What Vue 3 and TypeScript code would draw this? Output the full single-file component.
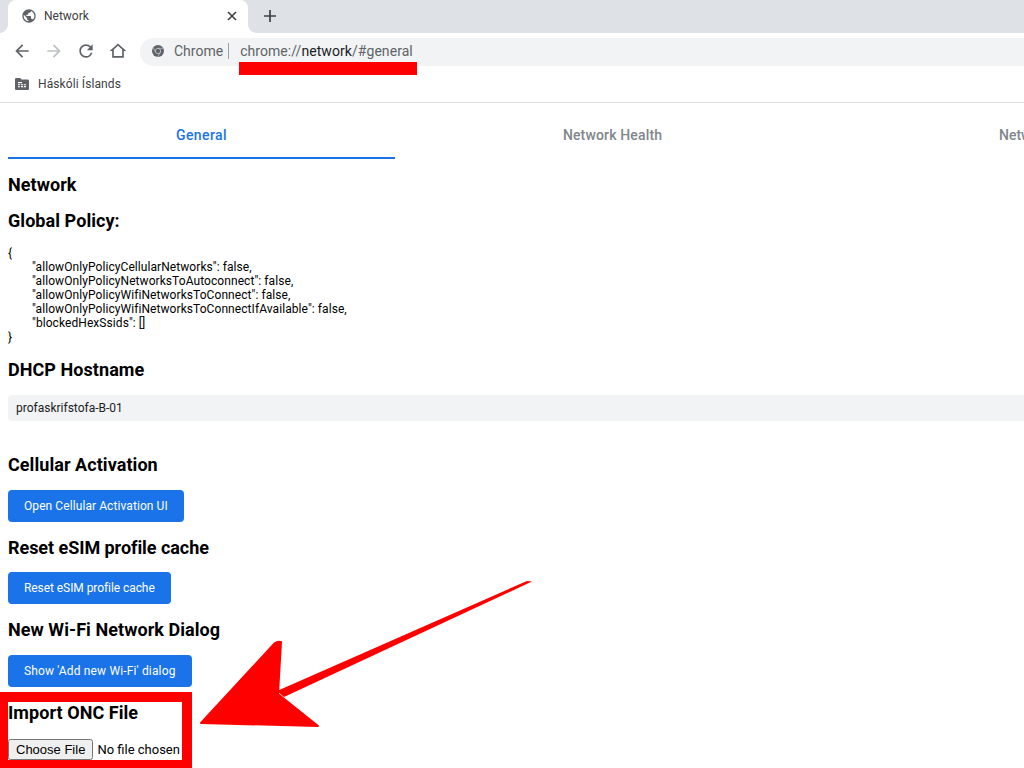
<script setup lang="ts">
const policy: string[] = [
  '"allowOnlyPolicyCellularNetworks": false,',
  '"allowOnlyPolicyNetworksToAutoconnect": false,',
  '"allowOnlyPolicyWifiNetworksToConnect": false,',
  '"allowOnlyPolicyWifiNetworksToConnectIfAvailable": false,',
  '"blockedHexSsids": []',
]
</script>

<template>
  <div class="page">
    <header class="tabstrip">
      <div class="tab">
        <svg class="favicon" viewBox="0 0 24 24" width="16" height="16">
          <path fill="#5f6368" d="M12 2C6.48 2 2 6.48 2 12s4.48 10 10 10 10-4.48 10-10S17.52 2 12 2zm-1 17.93c-3.95-.49-7-3.85-7-7.93 0-.62.08-1.21.21-1.79L9 15v1c0 1.1.9 2 2 2v1.93zm6.9-2.54c-.26-.81-1-1.39-1.9-1.39h-1v-3c0-.55-.45-1-1-1H8v-2h2c.55 0 1-.45 1-1V7h2c1.1 0 2-.9 2-2v-.41c2.93 1.19 5 4.06 5 7.41 0 2.08-.8 3.97-2.1 5.39z" />
        </svg>
        <span class="tab-title">Network</span>
        <svg class="tab-close" viewBox="0 0 10 10" width="10" height="10">
          <path d="M1 1l8 8M9 1l-8 8" stroke="#3c4043" stroke-width="1.6" fill="none" />
        </svg>
      </div>
      <svg class="new-tab" viewBox="0 0 12 12" width="12" height="12">
        <path d="M6 0v12M0 6h12" stroke="#3c4043" stroke-width="1.7" fill="none" />
      </svg>
    </header>

    <div class="toolbar">
      <svg class="nav" viewBox="0 0 24 24" width="20" height="20"><path fill="#5f6368" d="M20 11H7.83l5.59-5.59L12 4l-8 8 8 8 1.41-1.41L7.83 13H20v-2z" /></svg>
      <svg class="nav" viewBox="0 0 24 24" width="20" height="20"><path fill="#bdc1c6" d="M12 4l-1.41 1.41L16.17 11H4v2h12.17l-5.58 5.59L12 20l8-8z" /></svg>
      <svg class="nav" viewBox="0 0 24 24" width="20" height="20"><path fill="#5f6368" d="M17.65 6.35A7.958 7.958 0 0 0 12 4c-4.42 0-7.99 3.58-7.99 8s3.57 8 7.99 8c3.73 0 6.84-2.55 7.73-6h-2.08A5.99 5.99 0 0 1 12 18c-3.31 0-6-2.69-6-6s2.69-6 6-6c1.66 0 3.14.69 4.22 1.78L13 11h7V4l-2.35 2.35z" /></svg>
      <svg class="nav" viewBox="0 0 24 24" width="20" height="20"><path fill="#5f6368" d="M12 3L2 12h3v8h14v-8h3L12 3zm5 15H7v-7.8l5-4.5 5 4.5V18z" /></svg>
      <div class="omnibox">
        <svg class="chrome-logo" viewBox="0 0 12 12" width="12" height="12">
          <circle cx="6" cy="6" r="6" fill="#5f6368" />
          <circle cx="6" cy="6" r="2.700" fill="#5f6368" stroke="#c4c7ca" stroke-width="0.800" />
          <path d="M6 3.300h5.500M3.700 7.400L1 2.500M8.300 7.400L5.500 12" stroke="#c4c7ca" stroke-width="0.700" fill="none" />
        </svg>
        <span class="origin">Chrome</span>
        <span class="sep"></span>
        <span class="url">chrome://<b>network</b>/#general</span>
      </div>
    </div>

    <div class="bookmarks">
      <svg viewBox="0 0 14 12" width="14" height="12">
        <path fill="#5f6368" d="M1.300 0h4l1.300 1.500h6.100c.7 0 1.300.6 1.300 1.300v7.900c0 .7-.6 1.300-1.300 1.300H1.300C.6 12 0 11.400 0 10.700V1.300C0 .6.600 0 1.300 0z" />
        <path fill="#fff" d="M3 4h4v1.200H3zM3 6.200h2v1H3zM3 8.200h2v1H3zM6 6.200h5v3H6z" />
        <path fill="#5f6368" d="M8 6.200h1v3H8zM6 7.300h5v.8H6z" />
      </svg>
      <span>Háskóli Íslands</span>
    </div>

    <nav class="tabs">
      <div class="page-tab active">General</div>
      <div class="page-tab second">Network Health</div>
      <div class="page-tab third">Network Logs</div>
    </nav>

    <main class="content">
      <h2 class="h-network">Network</h2>
      <h2 class="h-policy">Global Policy:</h2>
      <div class="policy">
        <div>{</div>
        <div v-for="line in policy" :key="line" class="indent">{{ line }}</div>
        <div>}</div>
      </div>
      <h2 class="h-dhcp">DHCP Hostname</h2>
      <div class="hostname">profaskrifstofa-B-01</div>
      <h2 class="h-cell">Cellular Activation</h2>
      <button class="action open">Open Cellular Activation UI</button>
      <h2 class="h-next h-reset">Reset eSIM profile cache</h2>
      <button class="action reset">Reset eSIM profile cache</button>
      <h2 class="h-next">New Wi-Fi Network Dialog</h2>
      <button class="action show">Show 'Add new Wi-Fi' dialog</button>
      <h2 class="h-import">Import ONC File</h2>
      <input class="file" type="file" />
    </main>

    <div class="url-mark"></div>
    <div class="box-mark"></div>
    <svg class="arrow" viewBox="0 0 1024 768" width="1024" height="768">
      <path fill="#f00" d="M532 581.500 L527 581 L277 691 L284 697 Z" />
      <path fill="#f00" stroke="#f00" stroke-width="2" stroke-linejoin="round" d="M201 723 L275 643 Q278 641 281 642 L278 694 L318 726 Z" />
    </svg>
  </div>
</template>

<style>
html, body { margin: 0; overflow: hidden; background: #fff; }
</style>

<style scoped>
.page { position: relative; width: 1024px; height: 768px; overflow: hidden; background: #fff; font-family: Roboto, "Liberation Sans", sans-serif; color: #000; }
.tabstrip { height: 33px; background: #dee1e6; display: flex; align-items: center; padding-left: 8px; box-sizing: border-box; }
.tab { position: relative; width: 240px; height: 33px; background: #fff; border-radius: 8px 8px 0 0; display: flex; align-items: center; box-sizing: border-box; padding: 0 11px 2px 13px; }
.tab::before, .tab::after { content: ""; position: absolute; bottom: 0; width: 8px; height: 8px; }
.tab::before { left: -8px; background: radial-gradient(circle at 0 0, #dee1e6 7.500px, #fff 8px); }
.tab::after { right: -8px; background: radial-gradient(circle at 100% 0, #dee1e6 7.500px, #fff 8px); }
.favicon { flex: none; }
.tab-title { flex: 1; margin-left: 7px; font-size: 12px; color: #3c4043; }
.tab-close { flex: none; }
.new-tab { margin-left: 16px; margin-bottom: 2px; }
.toolbar { height: 38px; display: flex; align-items: center; padding-left: 12px; background: #fff; }
.nav { margin-right: 12px; margin-bottom: 2px; flex: none; }
.omnibox { height: 28px; box-sizing: border-box; padding-bottom: 2px; flex: 1; margin-right: -30px; background: #f1f3f4; border-radius: 14px; display: flex; align-items: center; padding-left: 12px; font-size: 14px; color: #5f6368; }
.chrome-logo { flex: none; }
.origin { margin-left: 10px; }
.sep { width: 1px; height: 16px; background: #9aa0a6; margin: 0 11px 0 5px; }
.url { color: #5f6368; letter-spacing: 0.06px; }
.url b { font-weight: 400; color: #202124; }
.bookmarks { height: 26px; padding-bottom: 5px; border-bottom: 1px solid #dadce0; display: flex; align-items: center; padding-left: 15px; font-size: 12px; color: #3c4043; letter-spacing: 0.1px; }
.bookmarks span { margin-left: 9px; }
.tabs { height: 56px; display: flex; overflow: hidden; padding-left: 8px; }
.page-tab { flex: none; box-sizing: border-box; height: 56px; line-height: 64px; font-size: 14px; font-weight: 500; color: #80868b; text-align: center; white-space: nowrap; }
.active { width: 387px; color: #1a73e8; border-bottom: 2px solid #1a73e8; letter-spacing: 0.4px; }
.second { width: 387px; margin-left: 24px; letter-spacing: 0.15px; }
.third { margin-left: 193px; }
.content { padding-left: 8px; display: flex; flex-direction: column; align-items: flex-start; }
h2 { margin: 0; font-size: 18px; font-weight: 700; line-height: 21px; color: #000; letter-spacing: 0.06px; }
.h-network { margin-top: 15px; }
.h-policy { margin-top: 15px; }
.policy { margin-top: 15px; font-size: 12px; line-height: 14px; color: #000; letter-spacing: 0.07px; }
.indent { padding-left: 24px; }
.h-dhcp { margin-top: 15px; }
.hostname { align-self: stretch; height: 26px; margin-top: 15px; background: #f1f3f4; border-radius: 4px 0 0 4px; padding-left: 8px; font-size: 12px; line-height: 26px; color: #202124; }
.h-cell { margin-top: 33px; }
.action { display: block; height: 32px; margin: 14px 0 0; padding: 0 16px; border: none; border-radius: 4px; background: #1a73e8; color: #fff; font-family: inherit; font-size: 12px; font-weight: 400; }
.open { margin-top: 15px; letter-spacing: 0.08px; }
.reset { letter-spacing: -0.07px; }
.show { margin-top: 15px; letter-spacing: 0.15px; }
.h-next { margin-top: 15px; }
.h-reset { letter-spacing: -0.05px; }
.h-import { margin-top: 15px; }
.file { height: 22px; margin-top: 16px; font-family: Roboto, sans-serif; font-size: 13px; color: #000; }
.url-mark { position: absolute; left: 239px; top: 62px; width: 178px; height: 13px; background: #f00; }
.box-mark { position: absolute; left: 0; top: 692px; width: 174px; height: 58px; border-style: solid; border-color: #f00; border-width: 10px 10px 8px 8px; }
.arrow { position: absolute; left: 0; top: 0; pointer-events: none; }
</style>
